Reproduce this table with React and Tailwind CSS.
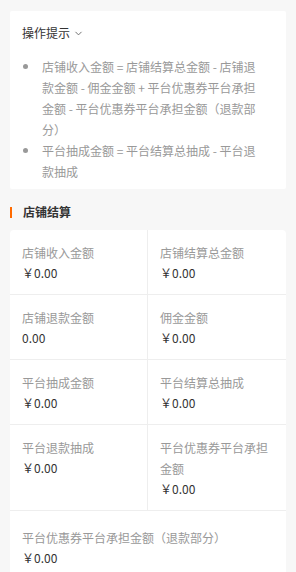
import React from 'react';
import { ChevronDown } from 'lucide-react';

const tips = [
  '店铺收入金额 = 店铺结算总金额 - 店铺退款金额 - 佣金金额 + 平台优惠券平台承担金额 - 平台优惠券平台承担金额（退款部分）',
  '平台抽成金额 = 平台结算总抽成 - 平台退款抽成',
];

const cells = [
  { label: '店铺收入金额', value: '￥0.00' },
  { label: '店铺结算总金额', value: '￥0.00' },
  { label: '店铺退款金额', value: '0.00' },
  { label: '佣金金额', value: '￥0.00' },
  { label: '平台抽成金额', value: '￥0.00' },
  { label: '平台结算总抽成', value: '￥0.00' },
  { label: '平台退款抽成', value: '￥0.00' },
  { label: '平台优惠券平台承担金额', value: '￥0.00' },
];

const App = () => {
  return (
    <div className="min-h-[572px] bg-[#f7f7f7] px-[10px] pt-[11px] font-['Noto_Sans_CJK_SC','Noto_Sans',sans-serif] text-[12px]">
      {/* 操作提示 */}
      <div className="rounded-[2px] bg-white pl-[12px] pr-[20px] pt-[12px] pb-[7px]">
        <div className="flex items-center gap-[3px] leading-[20px] text-[#333]">
          <span>操作提示</span>
          <ChevronDown className="h-[11px] w-[11px] text-[#666]" strokeWidth={2} />
        </div>
        <ul className="mt-[13px]">
          {tips.map((t, i) => (
            <li key={i} className="flex leading-[21px] text-[#999]">
              <span className="flex w-[20px] shrink-0 items-start pt-[8px] pl-[1px]">
                <span className="h-[5px] w-[5px] rounded-full bg-[#999]" />
              </span>
              <span className="w-[224px]">{t}</span>
            </li>
          ))}
        </ul>
      </div>

      {/* 店铺结算 */}
      <div className="mt-[13px] flex items-center leading-[20px]">
        <span className="h-[11px] w-[2px] bg-[#ff6a00]" />
        <span className="ml-[11px] font-semibold text-[#333]">店铺结算</span>
      </div>

      <div className="mt-[8px] grid grid-cols-2 rounded-t-[4px] bg-white">
        {cells.map((c, i) => (
          <div
            key={i}
            className={`border-b border-[#eeeeee] px-[12px] py-[12px] ${i % 2 === 0 ? 'border-r' : ''}`}
          >
            <div className="leading-[21px] text-[#999]">{c.label}</div>
            <div className="leading-[19px] text-[#333]">{c.value}</div>
          </div>
        ))}
        <div className="col-span-2 px-[12px] pt-[16px] pb-[12px]">
          <div className="leading-[21px] text-[#999]">平台优惠券平台承担金额（退款部分）</div>
          <div className="leading-[19px] text-[#333]">￥0.00</div>
        </div>
      </div>
    </div>
  );
};

export default App;
